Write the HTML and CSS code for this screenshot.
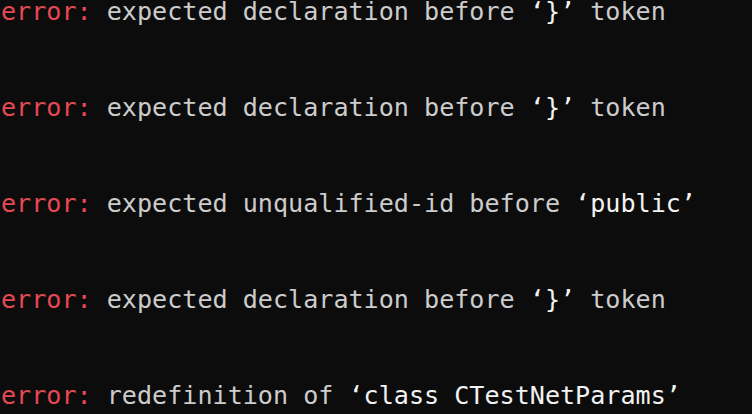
FILE: index.html
```html
<!DOCTYPE html>
<html lang="en">
<head>
<meta charset="utf-8">
<title>Compiler errors</title>
<link rel="stylesheet" href="styles.css">
</head>
<body>
<main class="terminal">
  <div class="line"><span class="err">error:</span> expected declaration before <span class="hl">‘}’</span> token</div>
  <div class="line"><span class="err">error:</span> expected declaration before <span class="hl">‘}’</span> token</div>
  <div class="line"><span class="err">error:</span> expected unqualified-id before <span class="hl">‘public’</span></div>
  <div class="line"><span class="err">error:</span> expected declaration before <span class="hl">‘}’</span> token</div>
  <div class="line"><span class="err">error:</span> redefinition of <span class="hl">‘class CTestNetParams’</span></div>
</main>
</body>
</html>
```
FILE: styles.css
```css
html, body {
  margin: 0;
  padding: 0;
  background: #0c0c0c;
  height: 100%;
  overflow: hidden;
}

.terminal {
  display: flex;
  flex-direction: column;
  gap: 72px;
  padding: 0 0 0 1px;
  font-family: "DejaVu Sans Mono", "Liberation Mono", monospace;
  font-size: 25.1px;
  line-height: 24px;
  color: #cccccc;
  white-space: pre;
}

.err {
  color: #e74856;
}

.hl {
  color: #f2f2f2;
}
```
